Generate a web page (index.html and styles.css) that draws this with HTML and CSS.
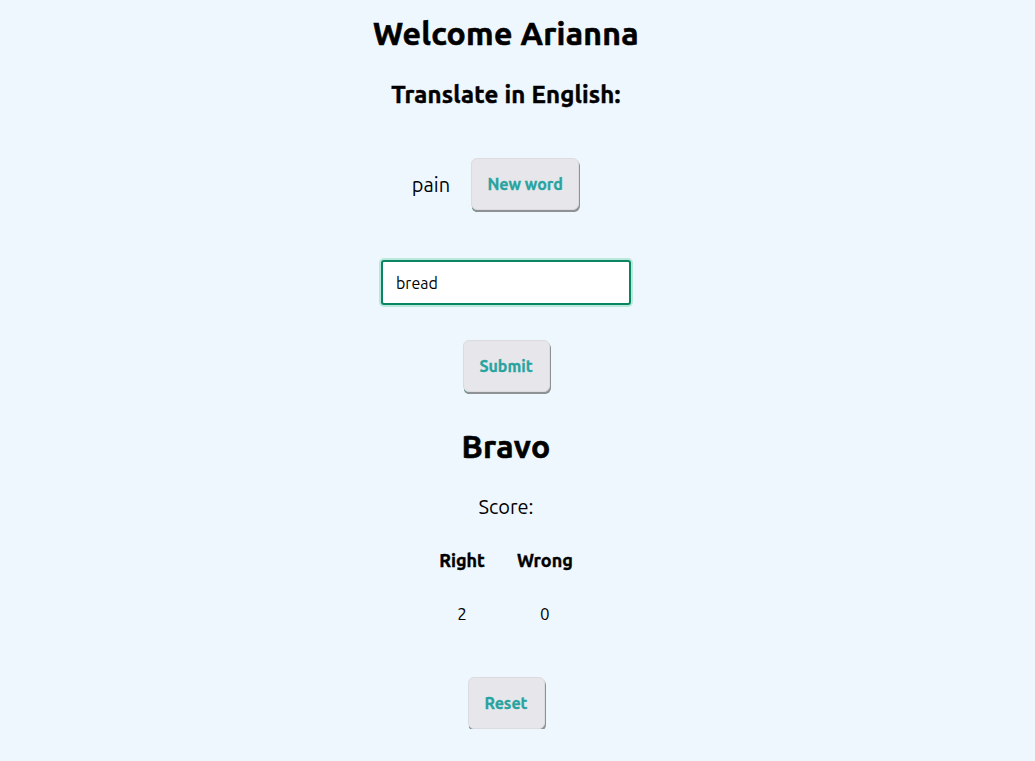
FILE: index.html
```html
<!DOCTYPE html>
<html lang="en">
<head>
<meta charset="utf-8">
<title>Translate</title>
<link rel="stylesheet" href="styles.css">
</head>
<body>
<main class="app">
  <h1 class="title">Welcome Arianna</h1>
  <h2 class="subtitle">Translate in English:</h2>
  <div class="word-row">
    <span class="word">pain</span>
    <button class="btn btn-new">New word</button>
  </div>
  <input class="answer" type="text" value="bread">
  <button class="btn btn-submit">Submit</button>
  <h1 class="result">Bravo</h1>
  <p class="score-label">Score:</p>
  <table class="score">
    <thead>
      <tr><th>Right</th><th>Wrong</th></tr>
    </thead>
    <tbody>
      <tr><td>2</td><td>0</td></tr>
    </tbody>
  </table>
  <button class="btn btn-reset">Reset</button>
</main>
</body>
</html>
```
FILE: styles.css
```css
html, body {
  margin: 0;
  padding: 0;
}
body {
  background: #eff7fe;
  font-family: Ubuntu, "Noto Sans", "Open Sans", sans-serif;
  color: #000;
  padding-right: 23px;
}
.app {
  display: flex;
  flex-direction: column;
  align-items: center;
  padding-top: 14px;
}
.title {
  font-size: 32px;
  font-weight: 700;
  margin: 0;
  line-height: 38px;
  letter-spacing: 0.25px;
  -webkit-text-stroke: 0.6px currentColor;
}
.subtitle {
  font-size: 24px;
  font-weight: 700;
  margin: 29px 0 0;
  line-height: 28px;
  letter-spacing: 0.2px;
  -webkit-text-stroke: 0.5px currentColor;
}
.word-row {
  display: flex;
  align-items: center;
  gap: 21px;
  margin-top: 49px;
}
.word {
  font-size: 20px;
}
.btn {
  font-family: inherit;
  font-weight: 700;
  font-size: 16px;
  color: #27a3a0;
  background: #e7e7eb;
  border: 1px solid #dcdce0;
  border-radius: 6px;
  box-shadow: 1px 2px 0 #8f9294, 0 3px 0 -1px #2b8a86;
  -webkit-text-stroke: 0.3px currentColor;
  cursor: pointer;
}
.btn-new {
  width: 108px;
  height: 52px;
  margin-right: 21px;
}
.answer {
  margin-top: 50px;
  width: 250px;
  height: 45px;
  box-sizing: border-box;
  font-family: inherit;
  font-size: 16px;
  padding: 0 13px;
  border: 2px solid #0b8462;
  border-radius: 3px;
  background: #fff;
  box-shadow: 0 0 0 2px #b9e8dc;
  outline: none;
  color: #000;
}
.btn-submit {
  margin-top: 35px;
  width: 87px;
  height: 52px;
}
.result {
  font-size: 32px;
  font-weight: 700;
  margin: 35px 0 0;
  line-height: 38px;
  letter-spacing: 0.4px;
  -webkit-text-stroke: 0.6px currentColor;
}
.score-label {
  font-size: 20px;
  margin: 30px 0 0;
  line-height: 24px;
}
.score {
  margin-top: 31px;
  border-collapse: collapse;
  border-spacing: 0;
}
.score th {
  font-size: 18px;
  font-weight: 700;
  padding: 0 16px;
  line-height: 20px;
  -webkit-text-stroke: 0.4px currentColor;
}
.score td {
  font-size: 17px;
  text-align: center;
  padding: 34px 0 0;
  line-height: 20px;
}
.btn-reset {
  margin-top: 53px;
  width: 77px;
  height: 52px;
}
```
